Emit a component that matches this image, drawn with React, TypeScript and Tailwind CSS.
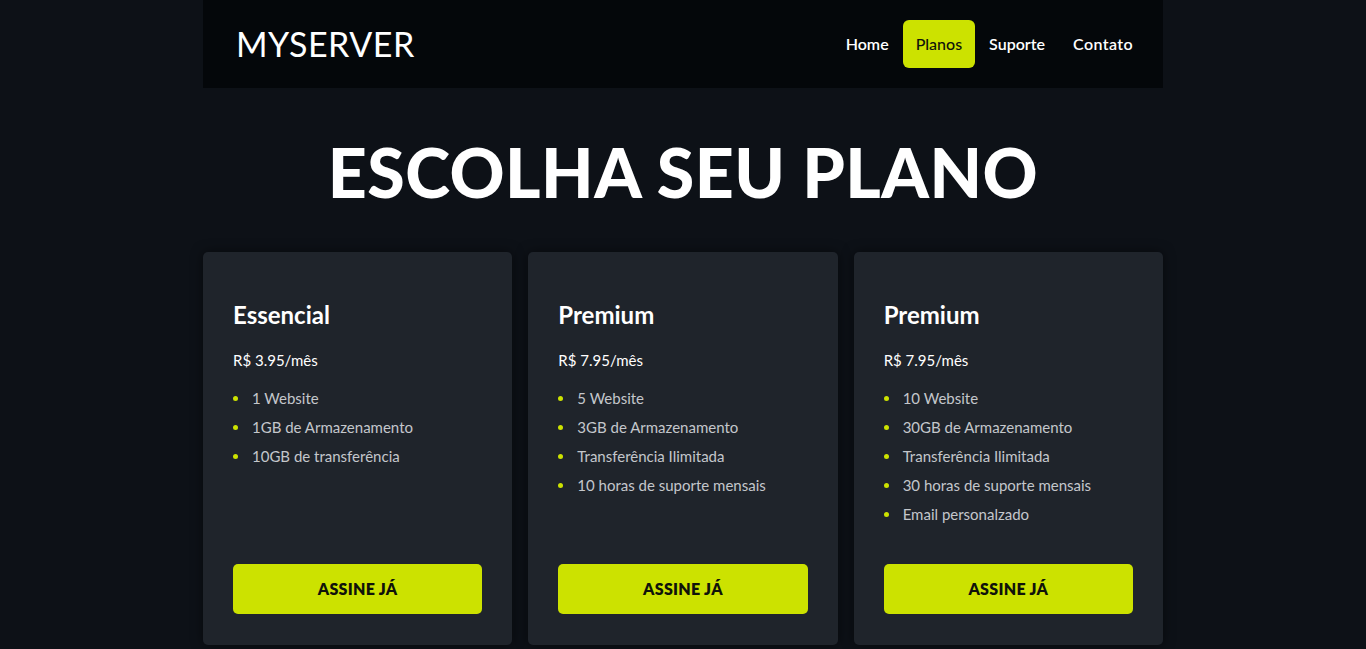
import React from "react";

const plans = [
  { name: "Essencial", price: "R$ 3.95/mês", items: ["1 Website", "1GB de Armazenamento", "10GB de transferência"] },
  { name: "Premium", price: "R$ 7.95/mês", items: ["5 Website", "3GB de Armazenamento", "Transferência Ilimitada", "10 horas de suporte mensais"] },
  { name: "Premium", price: "R$ 7.95/mês", items: ["10 Website", "30GB de Armazenamento", "Transferência Ilimitada", "30 horas de suporte mensais", "Email personalzado"] },
];

export default function App() {
  return (
    <div className="min-h-[649px] bg-[#0d1117] text-white" style={{ fontFamily: "Lato, 'Open Sans', sans-serif" }}>
      <div className="mx-auto w-[960px]">
        <header className="flex h-[88px] items-center justify-between bg-[#04070a] pl-[33px] pr-[16px]">
          <div className="text-[34px] font-normal tracking-[0.5px] leading-none">MYSERVER</div>
          <nav className="flex items-center text-[16px] font-semibold">
            <a className="px-[14px] py-[12px]">Home</a>
            <a className="rounded-[6px] bg-[#cce200] px-[13px] py-[12px] text-[#10140a] font-medium">Planos</a>
            <a className="px-[14px] py-[12px]">Suporte</a>
            <a className="px-[14px] py-[12px] tracking-[0.4px]">Contato</a>
          </nav>
        </header>
        <h1 className="mt-[50px] text-center text-[68px] font-black leading-none tracking-[0.5px]">ESCOLHA SEU PLANO</h1>
        <div className="mt-[46px] grid grid-cols-3 gap-[16px]">
          {plans.map((p, i) => (
            <div key={i} className="flex h-[393px] flex-col rounded-[5px] bg-[#1f242b] px-[30px] pb-[31px] pt-[48px] shadow-[0_0_12px_rgba(0,0,0,0.5)]">
              <h2 className="text-[24px] font-bold leading-[30px]">{p.name}</h2>
              <div className="mt-[20px] text-[15px] leading-[20px]">{p.price}</div>
              <ul className="mt-[14px] list-disc pl-[17px] text-[15px] text-[#c4c7cb] marker:text-[#cce200]">
                {p.items.map((it) => (
                  <li key={it} className="pl-[2px] leading-[29px]">{it}</li>
                ))}
              </ul>
              <button className="mt-auto h-[50px] w-full rounded-[5px] bg-[#cce200] text-[16px] font-extrabold tracking-[0.3px] text-[#10130a]">
                ASSINE JÁ
              </button>
            </div>
          ))}
        </div>
      </div>
    </div>
  );
}
